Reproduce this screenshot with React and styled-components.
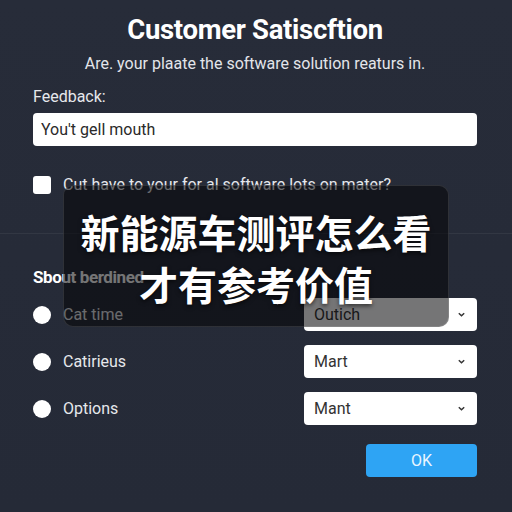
import React from 'react'
import styled, { createGlobalStyle } from 'styled-components'

const Global = createGlobalStyle`
  html, body { margin: 0; padding: 0; background: #262b38; }
  * { box-sizing: border-box; }
`

const Page = styled.div`
  position: relative;
  width: 512px;
  height: 512px;
  overflow: hidden;
  background: linear-gradient(180deg, #272c39 0%, #252a37 100%);
  font-family: Roboto, "Liberation Sans", sans-serif;
  color: #eceef2;
`

const Form = styled.div`
  display: flex;
  flex-direction: column;
  padding: 13px 35px 0 33px;
`

const Title = styled.h1`
  margin: 0;
  height: 34px;
  line-height: 34px;
  text-align: center;
  font-size: 27.5px;
  font-weight: 700;
  letter-spacing: -0.3px;
  color: #ffffff;
`

const Subtitle = styled.p`
  margin: 7px 0 0;
  line-height: 20px;
  text-align: center;
  font-size: 16px;
  color: #e3e5ea;
`

const Label = styled.label`
  margin-top: 13px;
  line-height: 20px;
  font-size: 16px;
  color: #e6e8ec;
`

const Input = styled.div`
  margin-top: 6px;
  height: 33px;
  display: flex;
  align-items: center;
  padding: 0 8px;
  background: #fff;
  border-radius: 4px;
  font-size: 16px;
  color: #2a2a2a;
`

const CheckRow = styled.div`
  margin-top: 29px;
  display: flex;
  align-items: center;
  gap: 12px;
  font-size: 16px;
  color: #e6e8ec;
`

const Box = styled.span`
  width: 18px;
  height: 18px;
  border-radius: 3px;
  background: #fff;
  flex: none;
`

const Divider = styled.hr`
  margin: 39px -35px 0 -33px;
  border: 0;
  border-top: 1px solid rgba(255, 255, 255, 0.06);
`

const Section = styled.h2`
  margin: 33px 0 0;
  line-height: 20px;
  font-size: 17px;
  font-weight: 700;
  color: #fff;
  letter-spacing: -0.4px;
`

const Options = styled.div`
  margin-top: 11px;
  display: flex;
  flex-direction: column;
  gap: 14px;
`

const OptionRow = styled.div`
  display: flex;
  align-items: center;
  justify-content: space-between;
  height: 33px;
`

const RadioLabel = styled.div`
  display: flex;
  align-items: center;
  gap: 12px;
  font-size: 16px;
  color: #e6e8ec;
`

const Dot = styled.span`
  width: 18px;
  height: 18px;
  border-radius: 50%;
  background: #fff;
  flex: none;
`

const Select = styled.div`
  width: 173px;
  height: 33px;
  display: flex;
  align-items: center;
  justify-content: space-between;
  padding: 0 11px 0 10px;
  background: #fff;
  border-radius: 4px;
  font-size: 16px;
  color: #333;
`

const Actions = styled.div`
  margin-top: 19px;
  display: flex;
  justify-content: flex-end;
`

const Button = styled.button`
  width: 111px;
  height: 33px;
  border: 0;
  border-radius: 4px;
  background: #2ea4f4;
  color: #eaf6ff;
  font-family: Roboto, "Liberation Sans", sans-serif;
  font-size: 16px;
`

const Overlay = styled.div`
  position: absolute;
  left: 63px;
  top: 185px;
  width: 386px;
  height: 142px;
  border-radius: 10px;
  background: rgba(3, 3, 5, 0.55);
  border: 1px solid rgba(255, 255, 255, 0.12);
  display: flex;
  flex-direction: column;
  align-items: center;
  justify-content: center;
  padding-top: 2px;
`

const Caption = styled.div`
  font-family: "Noto Sans CJK SC", sans-serif;
  font-weight: 700;
  font-size: 39px;
  line-height: 52px;
  color: #fff;
  text-shadow: 0 2px 4px rgba(0, 0, 0, 0.6);
  white-space: nowrap;
`

const Chevron = () => (
  <svg width="9" height="9" viewBox="0 0 10 10">
    <path d="M2 3.5 L5 6.5 L8 3.5" fill="none" stroke="#333" strokeWidth="1.6" />
  </svg>
)

const rows = [
  ['Cat time', 'Outich'],
  ['Catirieus', 'Mart'],
  ['Options', 'Mant'],
]

export default function App() {
  return (
    <Page>
      <Global />
      <Form>
        <Title>Customer Satiscftion</Title>
        <Subtitle>Are. your plaate the software solution reaturs in.</Subtitle>
        <Label>Feedback:</Label>
        <Input>You't gell mouth</Input>
        <CheckRow>
          <Box />
          Cut have to your for al software lots on mater?
        </CheckRow>
        <Divider />
        <Section>Sbout berdined</Section>
        <Options>
          {rows.map(([label, value]) => (
            <OptionRow key={label}>
              <RadioLabel>
                <Dot />
                {label}
              </RadioLabel>
              <Select>
                {value}
                <Chevron />
              </Select>
            </OptionRow>
          ))}
        </Options>
        <Actions>
          <Button>OK</Button>
        </Actions>
      </Form>
      <Overlay>
        <Caption>新能源车测评怎么看</Caption>
        <Caption>才有参考价值</Caption>
      </Overlay>
    </Page>
  )
}
